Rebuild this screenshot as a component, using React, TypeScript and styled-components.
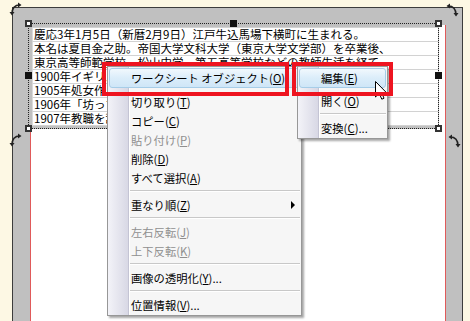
import React from 'react'
import styled, { createGlobalStyle, css } from 'styled-components'

const GlobalStyle = createGlobalStyle`
  html, body {
    margin: 0;
    padding: 0;
    background: #fdf8e4;
    overflow: hidden;
  }
  body {
    font-family: "Noto Sans CJK JP", "Noto Sans", sans-serif;
  }
`

const Screen = styled.div`
  position: relative;
  width: 470px;
  height: 321px;
  overflow: hidden;
  background: #fdf8e4;
`

const Frame = styled.div`
  margin: 7px 0 0 12px;
  width: 451px;
  height: 330px;
  box-sizing: border-box;
  border: 1px solid #3c3c3c;
  background: #c0c0c0;
  padding: 17px 16px 0 17px;
`

const Page = styled.div`
  display: flow-root;
  width: 416px;
  height: 100%;
  box-sizing: border-box;
  background: #fff;
  border-left: 1px solid #e05a5a;
  border-right: 1px solid #e05a5a;
`

const TextBox = styled.div`
  position: relative;
  margin: -2px 0 0 -3px;
  width: 411px;
  height: 106px;
  box-sizing: border-box;
  border: 1px dotted #222;
  background: #c0c0c0;
  padding: 3px 0 0 3px;
`

const Row = styled.div`
  height: 14px;
  box-sizing: border-box;
  background: #fff;
  border-bottom: 1px solid #d2d2d2;
  border-left: 1px solid #dadada;
  padding-left: 1px;
  font-size: 11.5px;
  line-height: 13px;
  color: #000;
  white-space: nowrap;
  overflow: hidden;
  &:first-child {
    height: 15px;
    border-top: 1px solid #d2d2d2;
  }
`

const Handle = styled.div<{ $x: number; $y: number; $solid?: boolean }>`
  position: absolute;
  left: ${({ $x }) => $x}px;
  top: ${({ $y }) => $y}px;
  width: 7px;
  height: 7px;
  box-sizing: border-box;
  ${({ $solid }) =>
    $solid
      ? css`
          background: #111;
          border: 1px solid #111;
        `
      : css`
          background: #fff;
          border: 2px solid #333;
        `}
`

const Rotate = styled.svg<{ $x: number; $y: number }>`
  position: absolute;
  left: ${({ $x }) => $x}px;
  top: ${({ $y }) => $y}px;
  width: 14px;
  height: 14px;
`

const Menu = styled.div<{ $x: number; $y: number; $w: number }>`
  position: absolute;
  left: ${({ $x }) => $x}px;
  top: ${({ $y }) => $y}px;
  width: ${({ $w }) => $w}px;
  box-sizing: border-box;
  border: 1px solid #979797;
  padding-bottom: 1px;
  background: linear-gradient(
    to right,
    #f3f3f8 0px,
    #d8d8e5 20px,
    #c4c4d4 20px,
    #c4c4d4 21px,
    #ffffff 21px,
    #ffffff 22px,
    #f6f6f6 22px
  );
  box-shadow: 2px 2px 2px rgba(0, 0, 0, 0.35);
  font-size: 11.3px;
`

const Item = styled.div<{ $disabled?: boolean; $active?: boolean; $h?: number }>`
  display: flex;
  align-items: center;
  height: ${({ $h }) => $h ?? 19}px;
  margin: 0 1px;
  padding-left: 21px;
  box-sizing: border-box;
  border: 1px solid transparent;
  border-radius: 3px;
  white-space: nowrap;
  color: ${({ $disabled }) => ($disabled ? '#8f8f8f' : '#000')};
  ${({ $active }) =>
    $active &&
    css`
      margin: 1px 1px 4px;
      border-color: #a6cde8;
      background: linear-gradient(#f1f8fd, #dbedfa 50%, #cfe6f7);
    `}
  u {
    text-decoration: underline;
  }
`

const SubArrow = styled.span`
  margin-left: auto;
  margin-right: 4px;
  width: 0;
  height: 0;
  border-left: 4px solid #000;
  border-top: 4px solid transparent;
  border-bottom: 4px solid transparent;
`

const Separator = styled.div`
  height: 0;
  border-top: 1px solid #c8c8c8;
  border-bottom: 1px solid #fff;
  margin: 3px 1px 3px 22px;
`

const RedBox = styled.div<{ $x: number; $y: number; $w: number; $h: number }>`
  position: absolute;
  left: ${({ $x }) => $x}px;
  top: ${({ $y }) => $y}px;
  width: ${({ $w }) => $w}px;
  height: ${({ $h }) => $h}px;
  box-sizing: border-box;
  border: 4px solid #ee1420;
`

const Cursor = styled.svg`
  position: absolute;
  left: 375px;
  top: 81px;
  width: 12px;
  height: 19px;
`

const rows = [
  '慶応3年1月5日（新暦2月9日）江戸牛込馬場下横町に生まれる。',
  '本名は夏目金之助。帝国大学文科大学（東京大学文学部）を卒業後、',
  '東京高等師範学校、松山中学、第五高等学校などの教師生活を経て',
  '1900年イギリスに留学。',
  '1905年処女作「吾輩は猫である」を発表。',
  '1906年「坊っちゃん」「草枕」を発表。',
  '1907年教職を辞し、朝日新聞社に入社。',
]

function RotateIcon({ x, y, flip }: { x: number; y: number; flip?: boolean }) {
  return (
    <Rotate $x={x} $y={y} viewBox="0 0 14 14" style={flip ? { transform: 'scaleX(-1)' } : undefined}>
      <path d="M3 12 C3 6 6 3 11 3" fill="none" stroke="#222" strokeWidth="1.6" />
      <path d="M9 0.5 L12.5 3 L9 5.5 Z" fill="#222" />
      <path d="M0.5 10 L3 13.5 L5.5 10 Z" fill="#222" />
    </Rotate>
  )
}

export default function App() {
  return (
    <Screen>
      <GlobalStyle />
      <Frame>
        <Page>
          <TextBox>
            {rows.map((r) => (
              <Row key={r}>{r}</Row>
            ))}
            <Handle $x={-4} $y={-4} />
            <Handle $x={201} $y={-4} $solid />
            <Handle $x={406} $y={-4} />
            <Handle $x={-4} $y={48} $solid />
            <Handle $x={406} $y={48} $solid />
            <Handle $x={-4} $y={101} />
            <Handle $x={406} $y={101} />
          </TextBox>
        </Page>
      </Frame>

      <RotateIcon x={9} y={2} />
      <RotateIcon x={445} y={3} flip />
      <RotateIcon x={9} y={133} />
      <RotateIcon x={447} y={134} flip />

      <Menu $x={107} $y={66} $w={195}>
        <Item $active $h={20}>
          ワークシート オブジェクト(<u>O</u>)
        </Item>
        <Item>
          切り取り(<u>T</u>)
        </Item>
        <Item>
          コピー(<u>C</u>)
        </Item>
        <Item $disabled>
          貼り付け(<u>P</u>)
        </Item>
        <Item>
          削除(<u>D</u>)
        </Item>
        <Item>
          すべて選択(<u>A</u>)
        </Item>
        <Separator />
        <Item>
          重なり順(<u>Z</u>)
          <SubArrow />
        </Item>
        <Separator />
        <Item $disabled>
          左右反転(<u>J</u>)
        </Item>
        <Item $disabled>
          上下反転(<u>K</u>)
        </Item>
        <Separator />
        <Item>
          画像の透明化(<u>Y</u>)...
        </Item>
        <Separator />
        <Item>
          位置情報(<u>V</u>)...
        </Item>
      </Menu>

      <Menu $x={297} $y={66} $w={91}>
        <Item $active $h={20}>
          編集(<u>E</u>)
        </Item>
        <Item $h={18}>
          開く(<u>O</u>)
        </Item>
        <Separator />
        <Item>
          変換(<u>C</u>)...
        </Item>
      </Menu>

      <Cursor viewBox="0 0 12 19">
        <path d="M0.5 0.5 L0.5 16 L4.2 12.4 L6.8 18.2 L9 17.2 L6.5 11.5 L11.3 11.5 Z" fill="#fff" stroke="#000" strokeWidth="1" />
      </Cursor>

      <RedBox $x={102} $y={62} $w={187} $h={34} />
      <RedBox $x={292} $y={62} $w={101} $h={34} />
    </Screen>
  )
}
